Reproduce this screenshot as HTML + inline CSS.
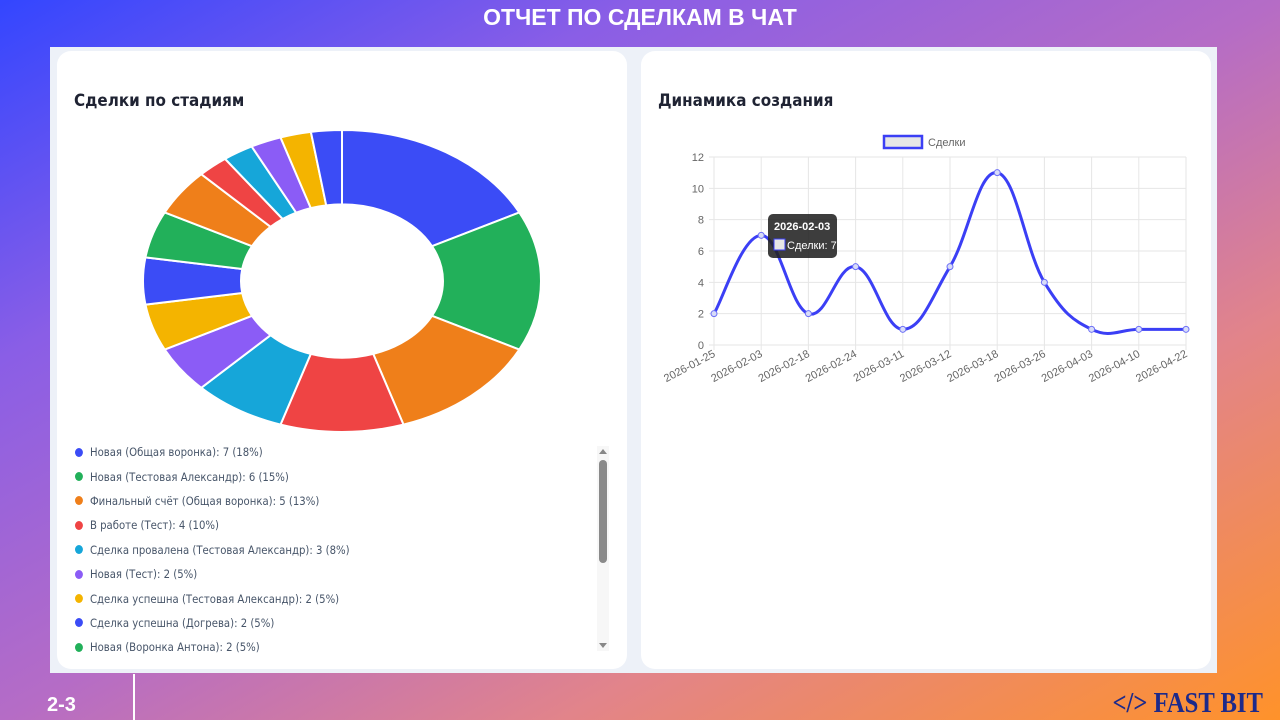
<!DOCTYPE html>
<html><head><meta charset="utf-8"><style>
*{margin:0;padding:0;box-sizing:border-box}
body{width:1280px;height:720px;overflow:hidden;position:relative;font-family:"Liberation Sans",sans-serif;
background:linear-gradient(to bottom right,#3346ff 0%,#8a5ee6 25%,#b56cc6 50%,#e2848a 72%,#ff922a 100%);}
.title{position:absolute;top:4px;left:0;width:1280px;text-align:center;color:#fff;font-weight:bold;font-size:23px}
.frame{position:absolute;left:50px;top:47px;width:1167px;height:626px;background:#edf1f8}
.card{position:absolute;background:#fff;border-radius:14px;top:4px;height:618px}
.h{position:absolute;left:17px;top:40px;font-size:16.5px;font-weight:bold;color:#1f2333;font-family:"DejaVu Sans",sans-serif;transform:scaleX(.92);transform-origin:left}
.leg{position:absolute;left:18px;top:389px;font-size:11.5px;color:#475569;font-family:"DejaVu Sans",sans-serif}
.leg div{height:24.4px;display:flex;align-items:center;transform:scaleX(.88);transform-origin:left;white-space:nowrap}
.leg i{display:inline-block;width:9px;height:9px;border-radius:50%;margin-right:8px}
.sb{position:absolute;left:540px;top:395px;width:12px;height:205px}
.num{position:absolute;left:47px;top:694px;color:#fff;font-weight:bold;font-size:20px}
.vl{position:absolute;left:133px;top:674px;width:2px;height:46px;background:#fff}
.fb{position:absolute;right:17px;top:688px;color:#1d2a8a;font-family:"Liberation Serif",serif;font-weight:bold;font-size:28px;transform:scaleX(.88);transform-origin:right}
</style></head><body>
<div class="title">ОТЧЕТ ПО СДЕЛКАМ В ЧАТ</div>
<div class="frame">
 <div class="card" style="left:7px;width:570px">
  <div class="h">Сделки по стадиям</div>
  <svg id="pie" width="570" height="400" style="position:absolute;left:0;top:0"></svg>
  <div class="leg">
   <div><i style="background:#3b4cf6"></i>Новая (Общая воронка): 7 (18%)</div>
   <div><i style="background:#22b05a"></i>Новая (Тестовая Александр): 6 (15%)</div>
   <div><i style="background:#ef7f1a"></i>Финальный счёт (Общая воронка): 5 (13%)</div>
   <div><i style="background:#ef4444"></i>В работе (Тест): 4 (10%)</div>
   <div><i style="background:#16a6d9"></i>Сделка провалена (Тестовая Александр): 3 (8%)</div>
   <div><i style="background:#8b5cf6"></i>Новая (Тест): 2 (5%)</div>
   <div><i style="background:#f4b400"></i>Сделка успешна (Тестовая Александр): 2 (5%)</div>
   <div><i style="background:#3b4cf6"></i>Сделка успешна (Догрева): 2 (5%)</div>
   <div><i style="background:#22b05a"></i>Новая (Воронка Антона): 2 (5%)</div>
  </div>
  <svg class="sb" viewBox="0 0 12 205"><rect x="0" y="0" width="12" height="205" fill="#f7f7f7"/><path d="M2 8 L6 3 L10 8Z" fill="#888"/><rect x="2" y="14" width="8" height="103" rx="4" fill="#8a8a8a"/><path d="M2 197 L6 202 L10 197Z" fill="#888"/></svg>
 </div>
 <div class="card" style="left:591px;width:570px">
  <div class="h">Динамика создания</div>
  <svg id="line" width="570" height="360" style="position:absolute;left:0;top:0" font-family="Liberation Sans, sans-serif" font-size="11" fill="#666"></svg>
 </div>
</div>
<div class="num">2-3</div>
<div class="vl"></div>
<div class="fb">&lt;/&gt; FAST BIT</div>
<script>
(function(){
var s=document.getElementById('pie');
var cols=['#3b4cf6','#22b05a','#ef7f1a','#ef4444','#16a6d9','#8b5cf6','#f4b400','#3b4cf6','#22b05a','#ef7f1a','#ef4444','#16a6d9','#8b5cf6','#f4b400','#3b4cf6'];
var vals=[7,6,5,4,3,2,2,2,2,2,1,1,1,1,1];
var tot=0;vals.forEach(v=>tot+=v);
var cx=285,cy=230,R=199,r=101,sy=151/199;
var a=-Math.PI/2,h='';
function p(rad,ang){return (cx+rad*Math.cos(ang)).toFixed(2)+' '+(cy+rad*Math.sin(ang)*sy).toFixed(2);}
vals.forEach(function(v,i){var b=a+v/tot*2*Math.PI;var lg=(b-a)>Math.PI?1:0;
h+='<path d="M'+p(R,a)+' A'+R+' '+(R*sy)+' 0 '+lg+' 1 '+p(R,b)+' L'+p(r,b)+' A'+r+' '+(r*sy)+' 0 '+lg+' 0 '+p(r,a)+'Z" fill="'+cols[i]+'" stroke="#fff" stroke-width="2"/>';a=b;});
s.innerHTML=h;
var L=document.getElementById('line');
var x0=73,x1=545,y0=294,y1=106;
var v=[2,7,2,5,1,5,11,4,1,1,1];
var lab=['2026-01-25','2026-02-03','2026-02-18','2026-02-24','2026-03-11','2026-03-12','2026-03-18','2026-03-26','2026-04-03','2026-04-10','2026-04-22'];
var g='';
for(var k=0;k<=6;k++){var y=y0-(y0-y1)*k/6;g+='<line x1="'+(x0-5)+'" y1="'+y+'" x2="'+x1+'" y2="'+y+'" stroke="#e6e6e6"/>';g+='<text x="'+(x0-10)+'" y="'+(y+4)+'" text-anchor="end">'+(k*2)+'</text>';}
var X=[],Y=[];
for(var i=0;i<11;i++){var x=x0+(x1-x0)*i/10;X.push(x);Y.push(y0-(y0-y1)*v[i]/12);
g+='<line x1="'+x+'" y1="'+y1+'" x2="'+x+'" y2="'+(y0+5)+'" stroke="#e6e6e6"/>';
g+='<text transform="translate('+(x+2)+','+(y0+11)+') rotate(-28)" text-anchor="end">'+lab[i]+'</text>';}
var d='M'+X[0]+' '+Y[0];
for(var i=0;i<10;i++){var pX=X[Math.max(i-1,0)],pY=Y[Math.max(i-1,0)],nX=X[Math.min(i+2,10)],nY=Y[Math.min(i+2,10)];
var t=0.4;var c1x=X[i]+(X[i+1]-pX)*t/2,c1y=Y[i]+(Y[i+1]-pY)*t/2,c2x=X[i+1]-(nX-X[i])*t/2,c2y=Y[i+1]-(nY-Y[i])*t/2;
c1y=Math.min(c1y,y0);c2y=Math.min(c2y,y0);
d+=' C'+c1x.toFixed(1)+' '+c1y.toFixed(1)+' '+c2x.toFixed(1)+' '+c2y.toFixed(1)+' '+X[i+1]+' '+Y[i+1];}
g+='<path d="'+d+'" fill="none" stroke="#3b3ff5" stroke-width="3"/>';
for(var i=0;i<11;i++)g+='<circle cx="'+X[i]+'" cy="'+Y[i]+'" r="3" fill="#d8dcf8" stroke="#6c6ff7" stroke-width="1"/>';
g+='<rect x="243" y="85" width="38" height="12" fill="#e6e6e6" stroke="#3b3ff5" stroke-width="2.5"/><text x="287" y="95">Сделки</text>';
g+='<rect x="127" y="163" width="69" height="44" rx="5" fill="#222" opacity=".88"/><text x="133" y="179" fill="#fff" font-weight="bold">2026-02-03</text><rect x="133" y="188" width="11" height="11" fill="#e6e6e6" stroke="#3b3ff5"/><text x="146" y="198" fill="#fff">Сделки: 7</text>';
L.innerHTML=g;
})();
</script>
</body></html>
